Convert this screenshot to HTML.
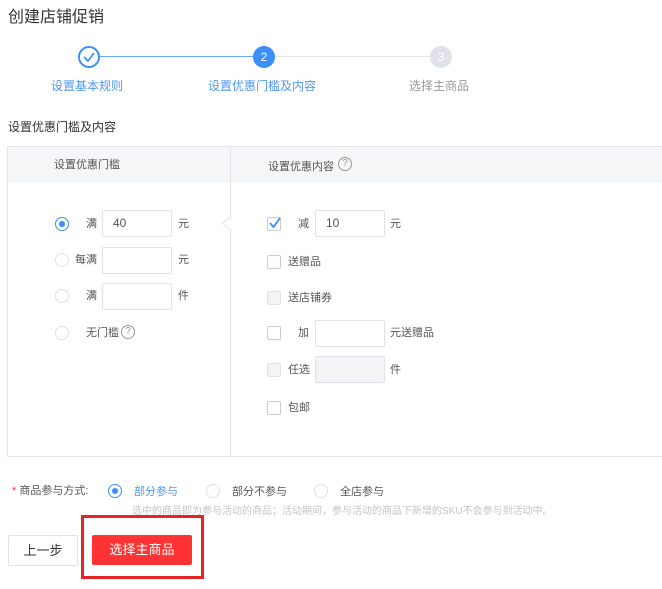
<!DOCTYPE html>
<html><head><meta charset="utf-8"><style>
*{margin:0;padding:0;box-sizing:border-box}
body{width:662px;height:589px;background:#fff;position:relative;overflow:hidden;font-family:"Liberation Sans","Noto Sans CJK SC",sans-serif;color:#555;font-size:12px}
.a{position:absolute;white-space:nowrap}
.rad{position:absolute;width:14px;height:14px;border:1px solid #dfe2e8;border-radius:50%;background:#fff}
.rad.on{border-color:#3b8ff6}
.rad.on::after{content:"";position:absolute;left:3px;top:3px;width:6px;height:6px;border-radius:50%;background:#3b8ff6}
.cb{position:absolute;width:14px;height:14px;border:1px solid #c8ccd4;border-radius:2px;background:#fff}
.cb.dis{background:#f3f4f6;border-color:#e0e2e6}
.inp{position:absolute;width:70px;height:27px;border:1px solid #dfe2e8;border-radius:2px;background:#fff;padding-left:10px;line-height:25px;color:#555}
.t{position:absolute;line-height:14px;font-size:11px;color:#555}
</style></head><body>
<div class="a" style="left:8px;top:8px;font-size:16px;color:#333;line-height:20px">创建店铺促销</div>
<div class="a" style="left:99px;top:56px;width:155px;height:1px;background:#6aa9f5"></div>
<div class="a" style="left:274px;top:56px;width:157px;height:1px;background:#e3e5ea"></div>
<div class="a" style="left:78px;top:46px;width:22px;height:22px;border:2px solid #3b8ff6;border-radius:50%;background:#fff"></div>
<svg class="a" style="left:82px;top:51px" width="14" height="12"><path d="M2 6 L6 10 L12 2" fill="none" stroke="#3b8ff6" stroke-width="1.6"/></svg>
<div class="a" style="left:253px;top:46px;width:22px;height:22px;border-radius:50%;background:#3b8ff6;color:#fff;text-align:center;line-height:22px;font-size:12px">2</div>
<div class="a" style="left:430px;top:46px;width:22px;height:22px;border-radius:50%;background:#dfe2e8;color:#fff;text-align:center;line-height:22px;font-size:12px">3</div>
<div class="a" style="left:51px;top:77px;font-size:12px;color:#4f97f3">设置基本规则</div>
<div class="a" style="left:208px;top:77px;font-size:12px;color:#4f97f3">设置优惠门槛及内容</div>
<div class="a" style="left:409px;top:77px;font-size:12px;color:#999">选择主商品</div>
<div class="a" style="left:8px;top:118px;font-size:12px;color:#333">设置优惠门槛及内容</div>
<div class="a" style="left:7px;top:146px;width:660px;height:311px;border:1px solid #e3e5ea"></div>
<div class="a" style="left:8px;top:147px;width:660px;height:36px;background:#f5f6f8"></div>
<div class="a" style="left:230px;top:147px;width:1px;height:310px;background:#e3e5ea"></div>
<div class="a" style="left:224px;top:219px;width:9px;height:9px;background:#fff;border-left:1px solid #e3e5ea;border-bottom:1px solid #e3e5ea;transform:rotate(45deg)"></div>
<div class="t" style="left:54px;top:158px">设置优惠门槛</div>
<div class="t" style="left:268px;top:160px">设置优惠内容</div>
<div class="a" style="left:338px;top:157px;width:14px;height:14px;border:1px solid #999;border-radius:50%;font-size:10px;line-height:12px;text-align:center;color:#999">?</div>
<div class="rad on" style="left:55px;top:217px"></div><div class="t" style="left:86px;top:217px">满</div>
<div class="inp" style="left:102px;top:210px">40</div><div class="t" style="left:178px;top:217px">元</div>
<div class="rad" style="left:55px;top:253px"></div><div class="t" style="left:75px;top:253px">每满</div>
<div class="inp" style="left:102px;top:247px"></div><div class="t" style="left:178px;top:253px">元</div>
<div class="rad" style="left:55px;top:289px"></div><div class="t" style="left:86px;top:289px">满</div>
<div class="inp" style="left:102px;top:283px"></div><div class="t" style="left:178px;top:289px">件</div>
<div class="rad" style="left:55px;top:326px"></div><div class="t" style="left:86px;top:326px">无门槛</div>
<div class="a" style="left:121px;top:325px;width:14px;height:14px;border:1px solid #999;border-radius:50%;font-size:10px;line-height:12px;text-align:center;color:#999">?</div>
<div class="cb" style="left:267px;top:217px;border-color:#c8ccd4"></div>
<svg class="a" style="left:268px;top:217px" width="14" height="13"><path d="M2 6 L5.5 10 L12 1" fill="none" stroke="#3b8ff6" stroke-width="1.8"/></svg>
<div class="t" style="left:298px;top:217px">减</div>
<div class="inp" style="left:315px;top:210px">10</div><div class="t" style="left:390px;top:217px">元</div>
<div class="cb" style="left:267px;top:255px"></div><div class="t" style="left:288px;top:255px">送赠品</div>
<div class="cb dis" style="left:267px;top:291px"></div><div class="t" style="left:288px;top:291px">送店铺券</div>
<div class="cb" style="left:267px;top:326px"></div><div class="t" style="left:298px;top:326px">加</div>
<div class="inp" style="left:315px;top:320px"></div><div class="t" style="left:390px;top:326px">元送赠品</div>
<div class="cb dis" style="left:267px;top:363px"></div><div class="t" style="left:288px;top:363px">任选</div>
<div class="inp" style="left:315px;top:356px;background:#f3f4f6"></div><div class="t" style="left:390px;top:363px">件</div>
<div class="cb" style="left:267px;top:401px"></div><div class="t" style="left:288px;top:401px">包邮</div>
<div class="t" style="left:12px;top:484px"><span style="color:#f33">*</span> 商品参与方式:</div>
<div class="rad on" style="left:108px;top:484px"></div><div class="t" style="left:134px;top:485px;color:#4f97f3">部分参与</div>
<div class="rad" style="left:206px;top:484px"></div><div class="t" style="left:232px;top:485px">部分不参与</div>
<div class="rad" style="left:314px;top:484px"></div><div class="t" style="left:340px;top:485px">全店参与</div>
<div class="a" style="left:132px;top:505px;font-size:10px;color:#c4c4c4;line-height:13px">选中的商品即为参与活动的商品；活动期间，参与活动的商品下新增的SKU不会参与到活动中。</div>
<div class="a" style="left:8px;top:535px;width:70px;height:31px;border:1px solid #dfe2e8;border-radius:2px;text-align:center;line-height:29px;font-size:13px;color:#333">上一步</div>
<div class="a" style="left:81px;top:515px;width:123px;height:64px;border:3px solid #e52525"></div>
<div class="a" style="left:92px;top:535px;width:100px;height:30px;background:#ff3333;border-radius:2px;color:#fff;text-align:center;line-height:30px;font-size:13px">选择主商品</div>
</body></html>
